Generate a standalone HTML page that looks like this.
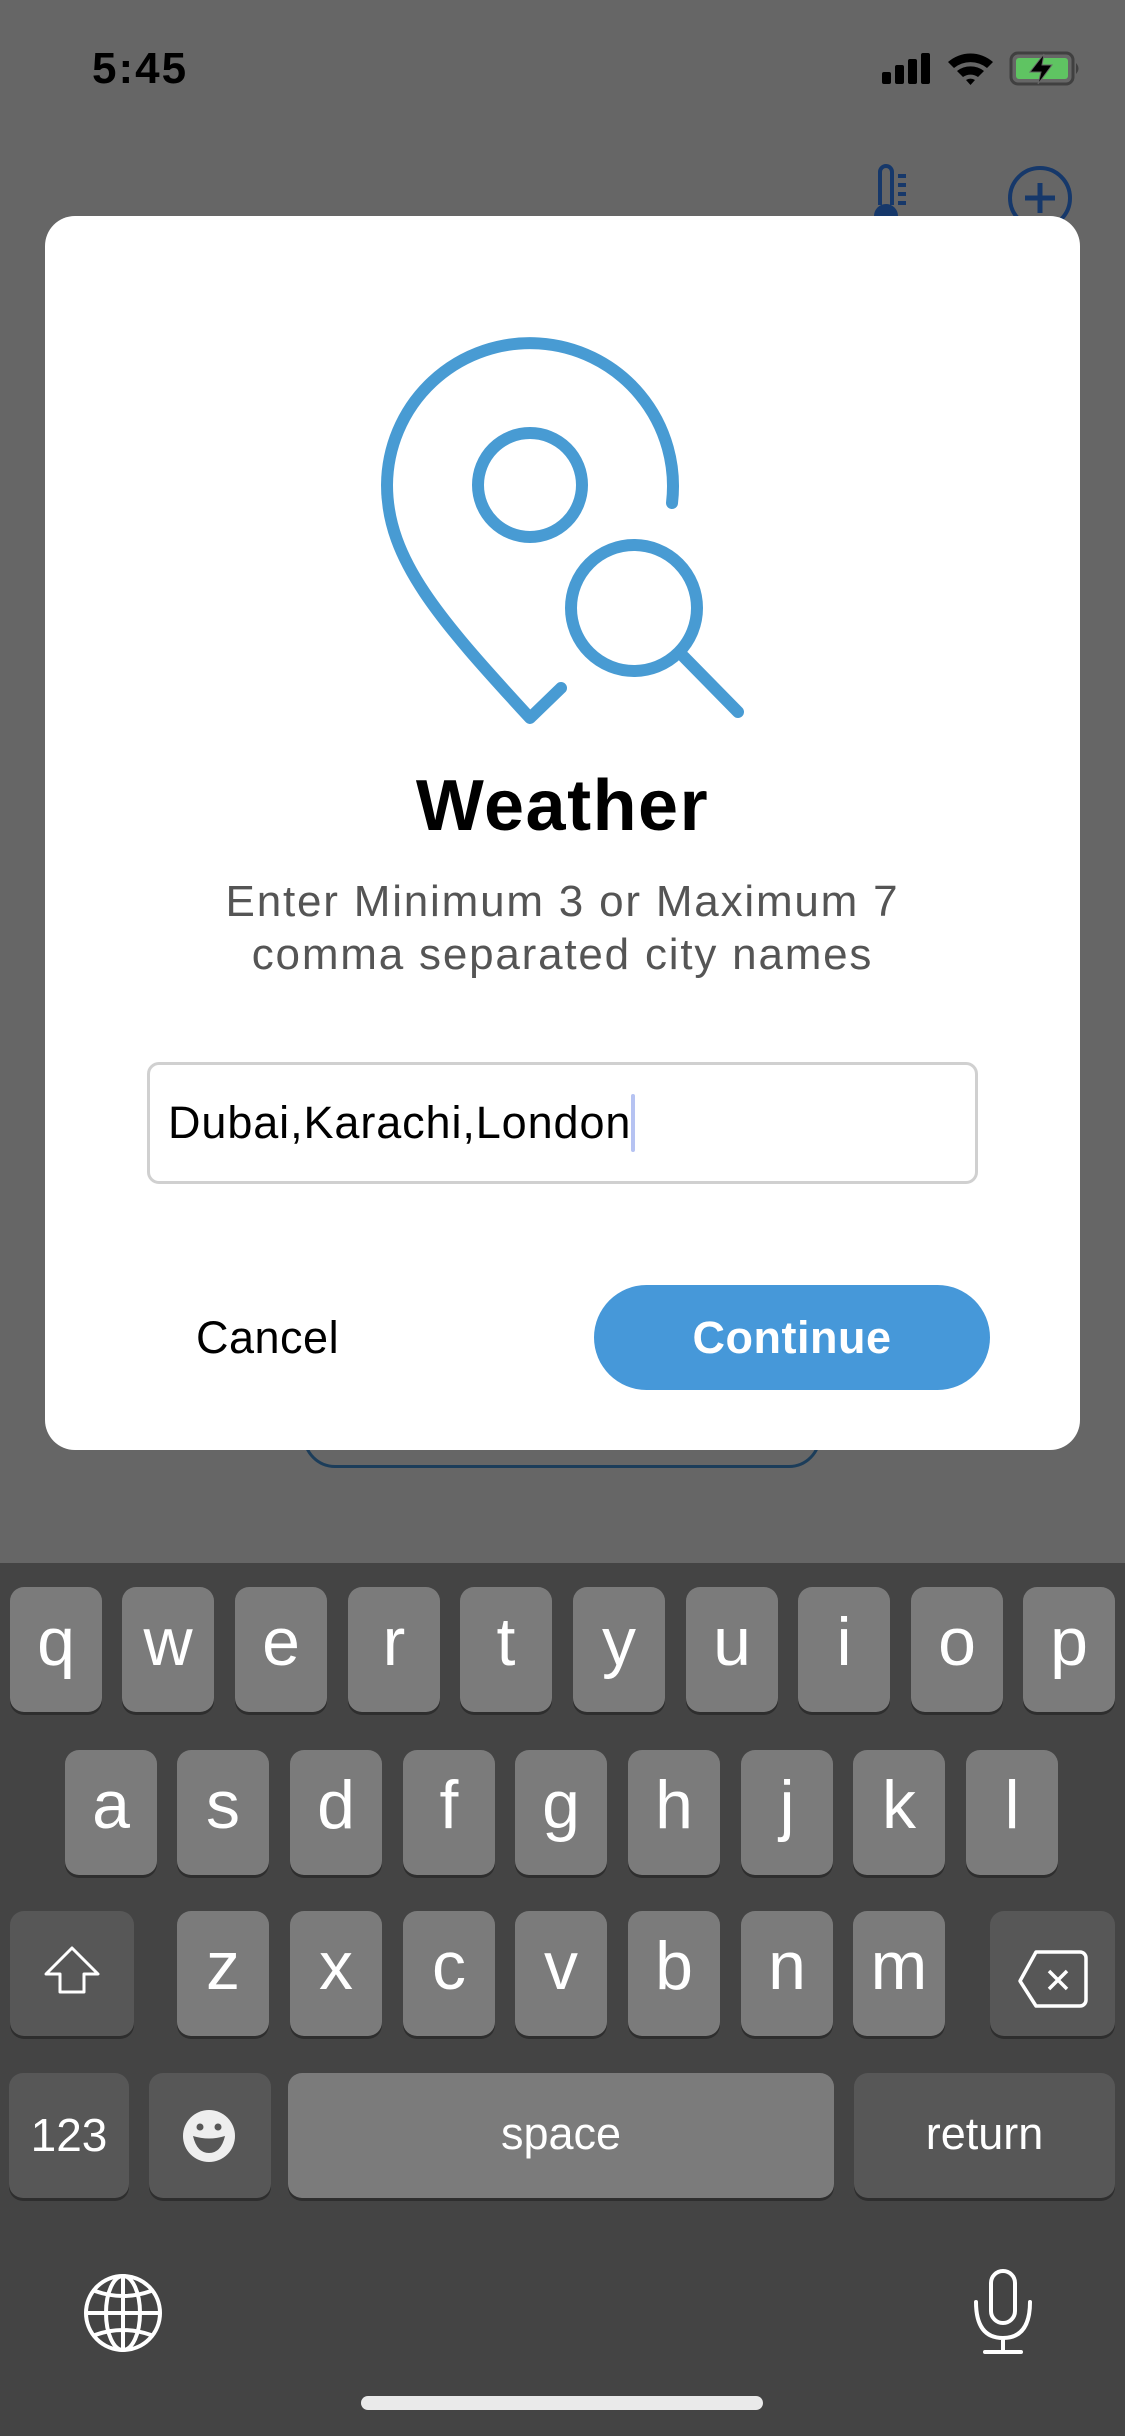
<!DOCTYPE html>
<html><head><meta charset="utf-8"><style>
*{margin:0;padding:0;box-sizing:border-box}
body{width:1125px;height:2436px;background:#666;position:relative;overflow:hidden;font-family:"Liberation Sans",sans-serif}
.a{position:absolute}
.k{position:absolute;width:92px;height:125px;background:#7b7b7b;border-radius:14px;box-shadow:0 3px 0 #2e2e2e;color:#fff;font-size:68px;text-align:center;line-height:112px}
.s{background:#575757}
.r .k{line-height:110px}
</style></head><body>
<div class="a" style="left:92px;top:44px;font-size:44px;font-weight:bold;letter-spacing:2px;color:#000;line-height:50px">5:45</div>
<svg class="a" style="left:870px;top:45px" width="220" height="50" viewBox="870 45 220 50">
<rect x="882" y="72" width="9" height="12" rx="2"/><rect x="895" y="65" width="9" height="19" rx="2"/><rect x="908" y="59" width="9" height="25" rx="2"/><rect x="921" y="53" width="9" height="31" rx="2"/>
<path d="M948 62 A34 34 0 0 1 993 62 L987 68 A26 26 0 0 0 954 68 Z"/><path d="M957 71 A22 22 0 0 1 984 71 L978 77 A13 13 0 0 0 963 77 Z"/><path d="M966 80 A8 8 0 0 1 975 80 L970.5 85 Z"/>
<rect x="1011" y="53" width="62" height="31" rx="7" fill="none" stroke="#404040" stroke-width="3"/><rect x="1016" y="58" width="52" height="21" rx="3" fill="#5fc462"/><path d="M1076 63 Q1081 68.5 1076 74 Z" fill="#404040"/>
<path d="M1044 54 L1030 72 L1041 72 L1038 84 L1052 65 L1042 65 Z" fill="#000" stroke="#666" stroke-width="1"/>
</svg>
<svg class="a" style="left:860px;top:160px" width="240" height="70" viewBox="860 160 240 70">
<path d="M880 205 L880 172 A6 6 0 0 1 892 172 L892 205" fill="none" stroke="#16386a" stroke-width="4"/>
<circle cx="886" cy="216" r="12" fill="#16386a"/>
<path d="M898 176h8M898 185h8M898 194h8M898 203h8" stroke="#16386a" stroke-width="4"/>
<circle cx="1040" cy="198" r="30" fill="none" stroke="#16386a" stroke-width="4"/>
<path d="M1040 183v30M1025 198h30" stroke="#16386a" stroke-width="5"/>
</svg>
<div class="a" style="left:303px;top:1380px;width:518px;height:88px;border:3px solid #1c3d5a;border-radius:32px"></div>
<div class="a" style="left:45px;top:216px;width:1035px;height:1234px;background:#fff;border-radius:30px"></div>
<svg class="a" style="left:360px;top:320px" width="400" height="420" viewBox="360 320 400 420">
<g fill="none" stroke="#489bd3" stroke-width="12" stroke-linecap="round" stroke-linejoin="round">
<path d="M672 503 A143 143 0 1 0 387 485 C387 560 440 620 530 718 L561 688"/>
<circle cx="530" cy="485" r="52"/>
<circle cx="634" cy="608" r="63"/>
<path d="M684 657 L738 712"/>
</g></svg>
<div class="a" style="left:0;width:1125px;top:768px;text-align:center;font-size:72px;font-weight:bold;letter-spacing:1.5px;color:#000;line-height:76px">Weather</div>
<div class="a" style="left:0;width:1125px;top:875px;text-align:center;font-size:44px;letter-spacing:1.8px;color:#555;line-height:53px">Enter Minimum 3 or Maximum 7<br>comma separated city names</div>
<div class="a" style="left:147px;top:1062px;width:831px;height:122px;border:3px solid #d0d0d0;border-radius:12px"></div>
<div class="a" style="left:168px;top:1097px;font-size:45px;color:#000;line-height:52px;letter-spacing:0.9px">Dubai,Karachi,London</div>
<div class="a" style="left:631px;top:1094px;width:4px;height:58px;background:#b6c3f2;border-radius:2px"></div>
<div class="a" style="left:196px;top:1312px;font-size:45px;color:#000;line-height:52px;letter-spacing:0.5px">Cancel</div>
<div class="a" style="left:594px;top:1285px;width:396px;height:105px;background:#4698d9;border-radius:53px;color:#fff;font-size:45px;font-weight:bold;letter-spacing:0.5px;text-align:center;line-height:105px">Continue</div>
<div class="a" style="left:0;top:1563px;width:1125px;height:873px;background:#444"></div>
<div class="r" style="position:absolute;left:0;top:1587px">
<div class="k" style="left:10px">q</div><div class="k" style="left:122px">w</div><div class="k" style="left:235px">e</div><div class="k" style="left:348px">r</div><div class="k" style="left:460px">t</div><div class="k" style="left:573px">y</div><div class="k" style="left:686px">u</div><div class="k" style="left:798px">i</div><div class="k" style="left:911px">o</div><div class="k" style="left:1023px">p</div>
</div>
<div class="r" style="position:absolute;left:0;top:1750px">
<div class="k" style="left:65px">a</div><div class="k" style="left:177px">s</div><div class="k" style="left:290px">d</div><div class="k" style="left:403px">f</div><div class="k" style="left:515px">g</div><div class="k" style="left:628px">h</div><div class="k" style="left:741px">j</div><div class="k" style="left:853px">k</div><div class="k" style="left:966px">l</div>
</div>
<div class="r" style="position:absolute;left:0;top:1911px">
<div class="k s" style="left:10px;width:124px"><svg width="124" height="125"><path d="M62 37 L88 63 L74 63 L74 81 L50 81 L50 63 L36 63 Z" fill="none" stroke="#fff" stroke-width="3" stroke-linejoin="round"/></svg></div>
<div class="k" style="left:177px">z</div><div class="k" style="left:290px">x</div><div class="k" style="left:403px">c</div><div class="k" style="left:515px">v</div><div class="k" style="left:628px">b</div><div class="k" style="left:741px">n</div><div class="k" style="left:853px">m</div>
<div class="k s" style="left:990px;width:125px"><svg width="125" height="125"><path d="M46 43 L90 43 A6 6 0 0 1 96 49 L96 91 A6 6 0 0 1 90 97 L46 97 L30 72 Z" fill="none" stroke="#fff" stroke-width="3.5" stroke-linejoin="round" transform="translate(0,-2)"/><path d="M59 60 L77 78 M77 60 L59 78" stroke="#fff" stroke-width="3.5"/></svg></div>
</div>
<div style="position:absolute;left:0;top:2073px">
<div class="k s" style="left:9px;width:120px;font-size:46px;line-height:125px">123</div>
<div class="k s" style="left:149px;width:122px"><svg width="122" height="125"><circle cx="60" cy="63" r="26" fill="#eee"/><circle cx="51" cy="54" r="3.5" fill="#575757"/><circle cx="69" cy="54" r="3.5" fill="#575757"/><path d="M44 63 Q60 68 76 63 Q72 80 60 80 Q48 80 44 63 Z" fill="#575757"/></svg></div>
<div class="k" style="left:288px;width:546px;font-size:45px;line-height:122px">space</div>
<div class="k s" style="left:854px;width:261px;font-size:45px;line-height:122px">return</div>
</div>
<svg class="a" style="left:80px;top:2270px" width="90" height="90" viewBox="80 2270 90 90"><g fill="none" stroke="#fff" stroke-width="4"><circle cx="123" cy="2313" r="37"/><ellipse cx="123" cy="2313" rx="17" ry="37"/><path d="M123 2276v74M86 2313h74M95 2291 Q123 2301 151 2291M95 2335 Q123 2325 151 2335"/></g></svg>
<svg class="a" style="left:960px;top:2260px" width="90" height="110" viewBox="960 2260 90 110"><g fill="none" stroke="#fff" stroke-width="4" stroke-linecap="round"><rect x="991" y="2271" width="24" height="52" rx="12"/><path d="M976 2302 Q976 2338 1003 2338 Q1030 2338 1030 2302M1003 2338v14M985 2352h36"/></g></svg>
<div class="a" style="left:361px;top:2396px;width:402px;height:14px;background:#eaeaea;border-radius:7px"></div>
</body></html>
